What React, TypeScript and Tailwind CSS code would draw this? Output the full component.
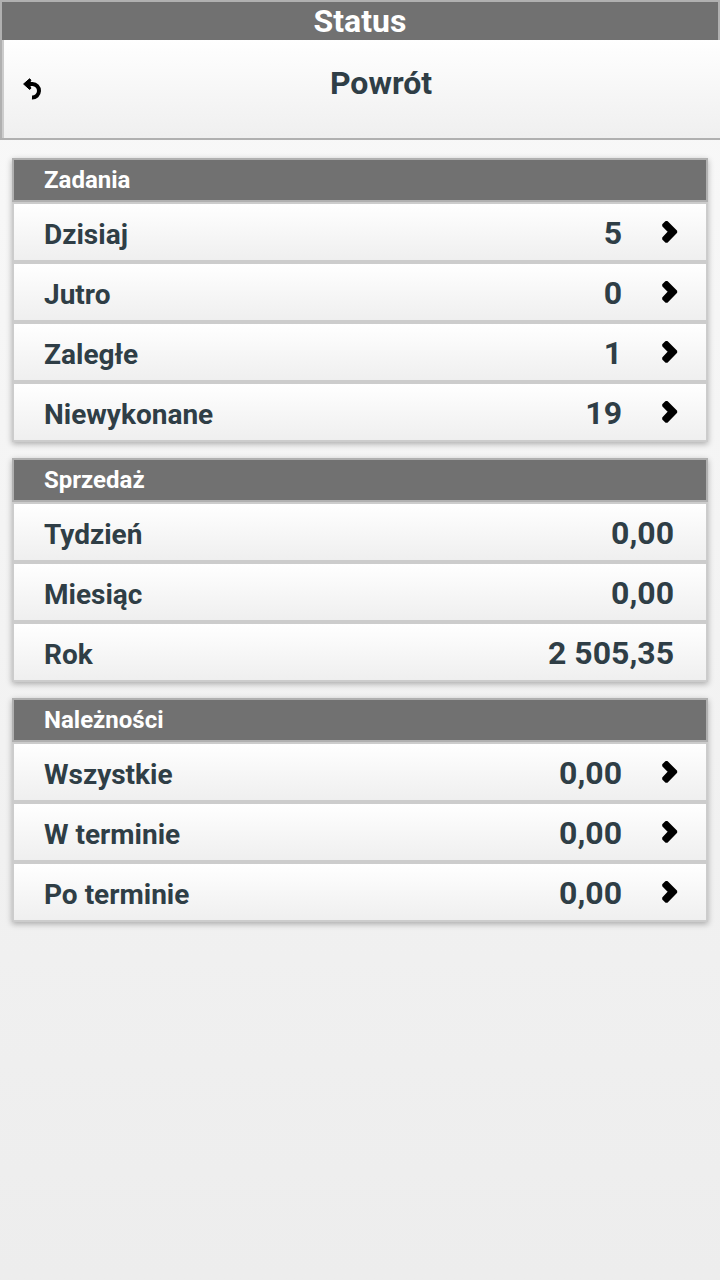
type Row = { label: string; value: string };
type Group = { title: string; linked: boolean; rows: Row[] };

const groups: Group[] = [
  {
    title: "Zadania",
    linked: true,
    rows: [
      { label: "Dzisiaj", value: "5" },
      { label: "Jutro", value: "0" },
      { label: "Zaległe", value: "1" },
      { label: "Niewykonane", value: "19" },
    ],
  },
  {
    title: "Sprzedaż",
    linked: false,
    rows: [
      { label: "Tydzień", value: "0,00" },
      { label: "Miesiąc", value: "0,00" },
      { label: "Rok", value: "2 505,35" },
    ],
  },
  {
    title: "Należności",
    linked: true,
    rows: [
      { label: "Wszystkie", value: "0,00" },
      { label: "W terminie", value: "0,00" },
      { label: "Po terminie", value: "0,00" },
    ],
  },
];

function Chevron() {
  return (
    <svg className="ml-10 h-6 w-4 shrink-0" viewBox="0 0 16 24" aria-hidden="true">
      <path
        d="M5 2 14.2 11.3V12.3L5 21.8H4L1.2 19V18L7 11.8 1.2 5.8V4.8L4 2Z"
        fill="#000"
        stroke="#000"
        strokeWidth="2"
        strokeLinejoin="round"
      />
    </svg>
  );
}

function BackArrow() {
  return (
    <svg className="h-6 w-5 shrink-0" viewBox="0 0 20 24" aria-hidden="true">
      <path d="M6 7H10.5A6.75 6.75 0 0 1 10 20.5" fill="none" stroke="#000" strokeWidth="4" />
      <path
        d="M1.6 7 7.6 1.8 9 3.2 7.6 5.6V8.6L9 11.2 7.6 12.4Z"
        fill="#000"
        stroke="#000"
        strokeWidth="1"
        strokeLinejoin="round"
      />
    </svg>
  );
}

const rowClass =
  "flex w-full items-center border-2 border-[#cccccc] bg-linear-to-b from-white to-[#efefef] pl-[30px] text-left font-bold text-[#2f3e46]";

function RowContent({ label, value }: Row) {
  return (
    <>
      <span className="flex-1 pt-1.5 text-[28px] leading-[50px]">{label}</span>
      <span className="pt-0.5 text-[32px] leading-[54px]">{value}</span>
    </>
  );
}

export default function App() {
  return (
    <div className="min-h-screen bg-linear-to-b from-[#f9f9f9] to-[#ededed] font-[Roboto,sans-serif]">
      <header>
        <h1 className="border-2 border-b-0 border-[#b0b0b0] bg-[#717171] text-center text-[32px] leading-[38px] font-bold text-white">
          Status
        </h1>
        <div className="border-b-2 border-l-2 border-[#b0b0b0]">
          <button
            type="button"
            className="flex w-full items-center border-l-2 border-[#cccccc] bg-linear-to-b from-white to-[#efefef] pl-[18px] text-[32px] font-bold text-[#2f3e46]"
          >
            <BackArrow />
            <span className="flex-1 pb-3 leading-[86px]">Powrót</span>
          </button>
        </div>
      </header>
      <main className="flex flex-col gap-4 px-3 pt-[18px] pb-4">
        {groups.map((group) => (
          <section key={group.title} className="shadow-[0_2px_6px_rgba(0,0,0,0.3)]">
            <h2 className="border-2 border-[#b0b0b0] bg-[#717171] pl-[30px] text-[24px] leading-10 font-bold text-white">
              {group.title}
            </h2>
            <ul>
              {group.rows.map((row) => (
                <li key={row.label}>
                  {group.linked ? (
                    <button type="button" className={`${rowClass} pr-7`}>
                      <RowContent {...row} />
                      <Chevron />
                    </button>
                  ) : (
                    <div className={`${rowClass} pr-8`}>
                      <RowContent {...row} />
                    </div>
                  )}
                </li>
              ))}
            </ul>
          </section>
        ))}
      </main>
    </div>
  );
}
